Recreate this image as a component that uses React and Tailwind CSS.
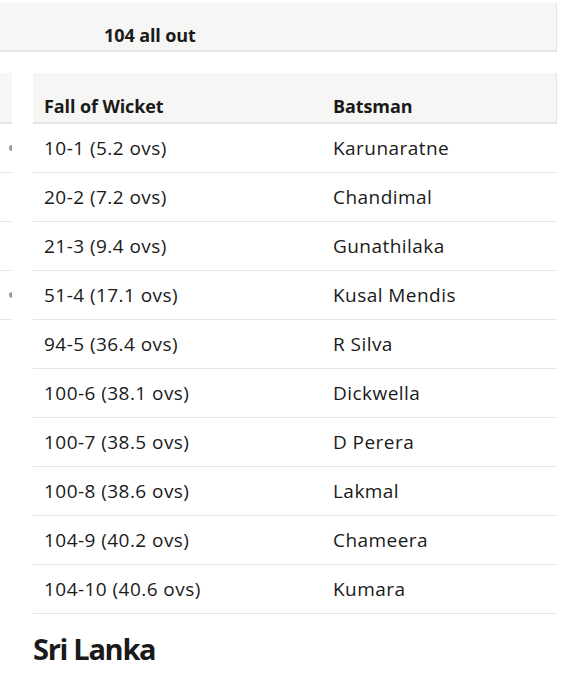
const wickets = [
  ['10-1 (5.2 ovs)', 'Karunaratne'],
  ['20-2 (7.2 ovs)', 'Chandimal'],
  ['21-3 (9.4 ovs)', 'Gunathilaka'],
  ['51-4 (17.1 ovs)', 'Kusal Mendis'],
  ['94-5 (36.4 ovs)', 'R Silva'],
  ['100-6 (38.1 ovs)', 'Dickwella'],
  ['100-7 (38.5 ovs)', 'D Perera'],
  ['100-8 (38.6 ovs)', 'Lakmal'],
  ['104-9 (40.2 ovs)', 'Chameera'],
  ['104-10 (40.6 ovs)', 'Kumara'],
];

const font = { fontFamily: '"Open Sans", "Liberation Sans", sans-serif' };

export default function App() {
  return (
    <div className="w-[587px] h-[680px] bg-white text-[#1a1a1a] overflow-hidden" style={font}>
      <div className="mt-[3px] w-[557px] h-[49px] bg-[#f6f6f4] border-b-2 border-r border-[#e4e4e2] pl-[104px] pt-[21px]">
        <span className="text-[18px] font-bold leading-none tracking-[-0.1px]">104 all out</span>
      </div>

      <div className="flex mt-[21px]">
        <div className="w-[12px] shrink-0">
          <div className="h-[51px] bg-[#f6f6f4] border-b-2 border-[#e4e4e2]" />
          {[true, false, false, true].map((dot, i) => (
            <div key={i} className="h-[49px] border-b border-[#e6e6e6] flex items-center justify-end">
              {dot && <span className="w-[3px] h-[6px] rounded-l-full bg-[#9a9a9a]" />}
            </div>
          ))}
        </div>

        <div className="ml-[21px] w-[524px]">
          <div className="h-[51px] bg-[#f6f6f4] border-b-2 border-r border-[#e4e4e2] grid grid-cols-[289px_1fr] px-[11px] pt-[24px] text-[18px] font-bold leading-none tracking-[-0.1px]">
            <span>Fall of Wicket</span>
            <span>Batsman</span>
          </div>
          {wickets.map(([fow, name]) => (
            <div key={fow} className="h-[49px] border-b border-[#e6e6e6] grid grid-cols-[289px_1fr] items-center px-[11px] text-[19px] tracking-[0.45px]">
              <span>{fow}</span>
              <span>{name}</span>
            </div>
          ))}
        </div>
      </div>

      <h2 className="ml-[33px] mt-[20px] text-[29px] font-bold leading-none tracking-[-1.3px]">Sri Lanka</h2>
    </div>
  );
}
